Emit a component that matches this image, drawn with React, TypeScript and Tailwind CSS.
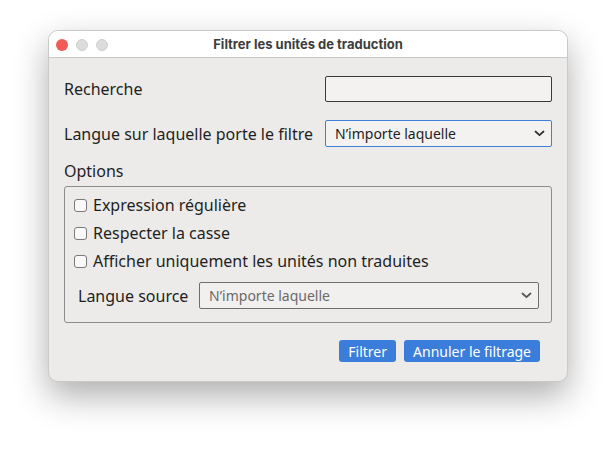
import React from 'react'

const font = { fontFamily: '"Noto Sans", "Open Sans", sans-serif' }

function Chevron({ color = '#333' }: { color?: string }) {
  return (
    <svg width="11" height="7" viewBox="0 0 11 7" fill="none">
      <path d="M1.5 1.5 5.5 5.2 9.5 1.5" stroke={color} strokeWidth="1.8" strokeLinecap="round" strokeLinejoin="round" />
    </svg>
  )
}

function Check({ label }: { label: string }) {
  return (
    <div className="flex h-[28px] items-center">
      <span className="ml-[9px] h-[13px] w-[13px] rounded-[3px] border border-[#7a7a7a] bg-[#f9f9f9]" />
      <span className="ml-[6px] text-[16px] text-[#1f1f1f]">{label}</span>
    </div>
  )
}

export default function App() {
  return (
    <div className="min-h-[449px] w-[616px] bg-white pl-[48px] pt-[30px]" style={font}>
      <div className="flex h-[352px] w-[520px] flex-col overflow-hidden rounded-[10px] border border-[#c9c9c9] bg-[#ecebe9] shadow-[0_14px_34px_rgba(0,0,0,0.32)]">
        {/* title bar */}
        <div className="relative flex h-[27px] items-center justify-center border-b border-[#c8c8c8] bg-white">
          <div className="absolute left-[7px] top-[8px] flex gap-[8px]">
            <span className="h-[12px] w-[12px] rounded-full bg-[#f25a55]" />
            <span className="h-[12px] w-[12px] rounded-full bg-[#dcdcdc] border border-[#cfcfcf]" />
            <span className="h-[12px] w-[12px] rounded-full bg-[#dcdcdc] border border-[#cfcfcf]" />
          </div>
          <span className="pt-[1px] text-[13px] font-bold text-[#3d3d3d]" style={{ fontFamily: 'Inter, "Liberation Sans", sans-serif' }}>
            Filtrer les unités de traduction
          </span>
        </div>

        {/* body */}
        <div className="flex flex-1 flex-col px-[15px] pt-[18px]">
          <div className="flex h-[26px] items-center">
            <span className="w-[261px] text-[16px] text-[#1f1f1f]">Recherche</span>
            <div className="h-[26px] w-[227px] rounded-[2px] border border-[#3a3a3a] bg-[#f3f2f1]" />
          </div>

          <div className="mt-[18px] flex h-[27px] items-center">
            <span className="w-[261px] text-[16px] text-[#1f1f1f]">Langue sur laquelle porte le filtre</span>
            <div className="flex h-[27px] w-[227px] items-center justify-between rounded-[2px] border border-[#3f7fd6] bg-[#f3f2f1] pl-[9px] pr-[6px]">
              <span className="text-[14px] text-[#1f1f1f]">N’importe laquelle</span>
              <Chevron />
            </div>
          </div>

          <div className="mt-[12px] text-[16px] text-[#1f1f1f]">Options</div>

          <div className="mt-[3px] flex h-[137px] w-[488px] flex-col rounded-[3px] border border-[#8c8c8c] pt-[4px]">
            <Check label="Expression régulière" />
            <Check label="Respecter la casse" />
            <Check label="Afficher uniquement les unités non traduites" />
            <div className="mt-[7px] flex h-[27px] items-center pl-[13px]">
              <span className="w-[121px] text-[16px] text-[#1f1f1f]">Langue source</span>
              <div className="flex h-[27px] w-[340px] items-center justify-between rounded-[2px] border border-[#6e6e6e] bg-[#f1f0ef] pl-[9px] pr-[6px]">
                <span className="text-[14px] text-[#6a6a6a]">N’importe laquelle</span>
                <Chevron color="#555" />
              </div>
            </div>
          </div>

          <div className="mt-[17px] flex justify-end gap-[8px] pr-[12px]">
            <button className="h-[22px] rounded-[3px] bg-[#3b7ddb] px-[9px] text-[14px] text-white">Filtrer</button>
            <button className="h-[22px] rounded-[3px] bg-[#3b7ddb] px-[9px] text-[14px] text-white">Annuler le filtrage</button>
          </div>
        </div>
      </div>
    </div>
  )
}
